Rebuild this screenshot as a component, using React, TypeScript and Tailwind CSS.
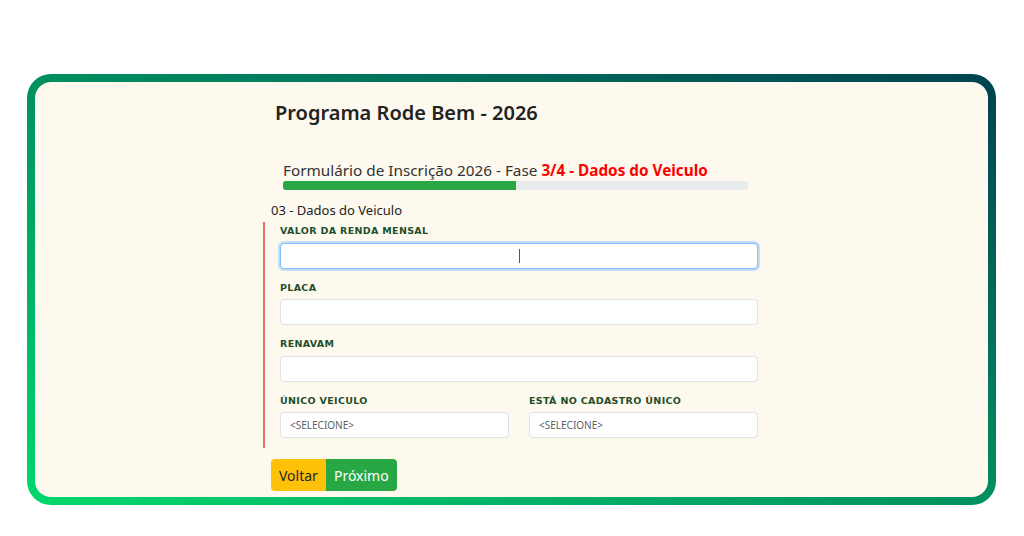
import React from "react"

const labelCls =
  "block text-[9.5px] font-bold uppercase tracking-[0.035em] text-[#1f4f2a] leading-none"
const labelFont = { fontFamily: '"DejaVu Sans", "Open Sans", sans-serif' }
const inputCls =
  "block w-full h-[26px] rounded-[4px] border border-[#dfe3e8] bg-white px-2 text-[11px] text-[#495057] outline-none"

function Field({ label, focused }: { label: string; focused?: boolean }) {
  return (
    <div>
      <label className={labelCls} style={labelFont}>
        {label}
      </label>
      <div className="relative mt-[7px]">
        <input
          type="text"
          className={
            focused
              ? "block w-full h-[26px] rounded-[4px] border border-[#80bdff] bg-white px-2 text-[11px] outline-none shadow-[0_0_0_2px_rgba(0,123,255,0.22)]"
              : inputCls
          }
        />
        {focused && (
          <span className="absolute left-[239px] top-[6px] h-[14px] w-px bg-[#555]" />
        )}
      </div>
    </div>
  )
}

function SelectField({ label }: { label: string }) {
  return (
    <div className="flex-1">
      <label className={labelCls} style={labelFont}>
        {label}
      </label>
      <select className="mt-[7px] block w-full h-[26px] appearance-none rounded-[4px] border border-[#dfe3e8] bg-white px-[9px] text-[10px] text-[#5a6168] outline-none">
        <option>&lt;SELECIONE&gt;</option>
      </select>
    </div>
  )
}

export default function App() {
  return (
    <div
      className="h-[536px] w-[1024px] bg-white pt-[74px] pl-[27px]"
      style={{ fontFamily: '"Noto Sans", "Open Sans", sans-serif' }}
    >
      <div className="h-[431px] w-[969px] rounded-[24px] bg-gradient-to-tr from-[#00d86c] via-[#009060] to-[#00424f] p-[8px]">
        <div className="h-full w-full rounded-[16px] bg-[#fdf9ee] pl-[228px] pt-[17px]">
          <div className="w-[495px]">
            <h1 className="ml-[12px] text-[20px] font-semibold leading-[28px] text-[#222]">
              Programa Rode Bem - 2026
            </h1>

            <div className="ml-[20px] mt-[33px] w-[465px]">
              <p className="text-[15.3px] leading-[20px] text-[#333]">
                Formulário de Inscrição 2026 - Fase{" "}
                <span className="font-bold text-[#ff0000]">3/4 - Dados do Veiculo</span>
              </p>
              <div className="mt-[1px] h-[9px] w-full overflow-hidden rounded-[3px] bg-[#e9ecef]">
                <div className="h-full w-[50%] bg-[#28a745]" />
              </div>
            </div>

            <p className="ml-[8px] mt-[10px] text-[13px] leading-[20px] text-[#222]">
              03 - Dados do Veiculo
            </p>

            <div className="mt-[2px] border-l-2 border-[#e2735c] pb-[10px] pl-[15px] pt-[4px]">
              <div className="flex flex-col gap-[14px]">
                <Field label="Valor da renda mensal" focused />
                <Field label="Placa" />
                <Field label="Renavam" />
                <div className="flex gap-[20px]">
                  <SelectField label="Único veiculo" />
                  <SelectField label="Está no cadastro único" />
                </div>
              </div>
            </div>

            <div className="ml-[8px] mt-[11px] flex">
              <button className="h-[32px] rounded-l-[4px] bg-[#ffc107] px-[8px] text-[14px] text-[#212529]">
                Voltar
              </button>
              <button className="h-[32px] rounded-r-[4px] bg-[#28a745] px-[8px] text-[14px] text-white">
                Próximo
              </button>
            </div>
          </div>
        </div>
      </div>
    </div>
  )
}
